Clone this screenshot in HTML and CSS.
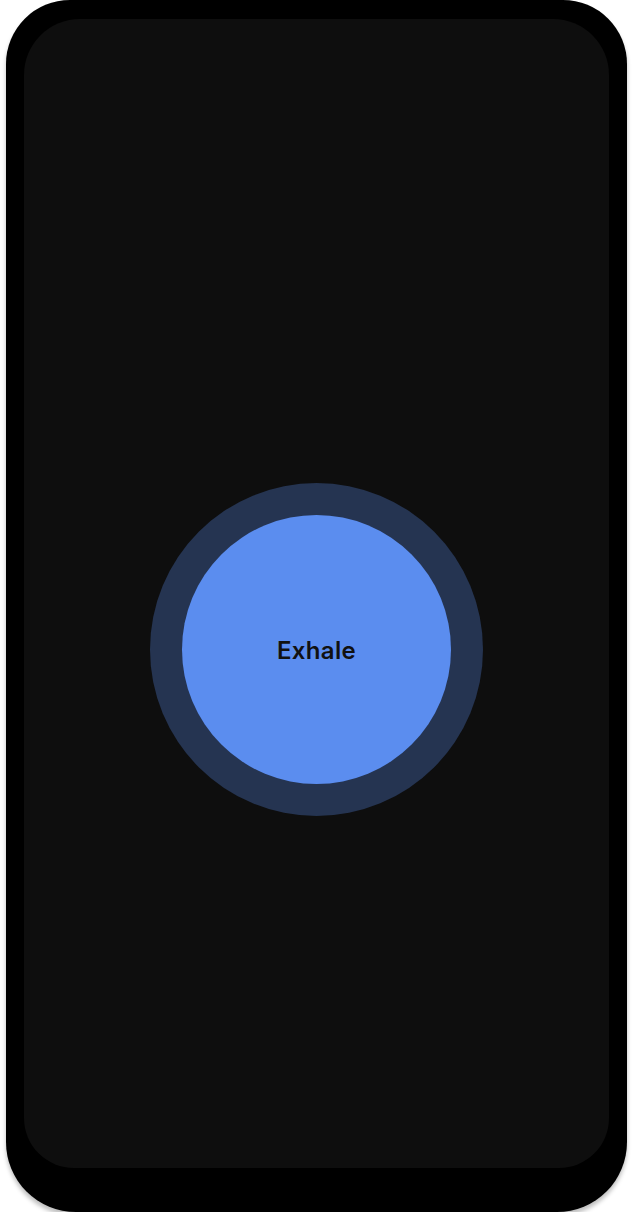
FILE: index.html
```html
<!DOCTYPE html>
<html>
<head>
<meta charset="utf-8">
<link rel="stylesheet" href="styles.css">
</head>
<body>
<div class="device">
  <div class="screen">
    <div class="ring">
      <div class="core">
        <span class="label">Exhale</span>
      </div>
    </div>
  </div>
</div>
</body>
</html>
```
FILE: styles.css
```css
html, body {
  margin: 0;
  padding: 0;
  background: #ffffff;
}
body {
  font-family: Inter, "Noto Sans", sans-serif;
}
.device {
  box-sizing: border-box;
  margin-left: 6px;
  width: 621px;
  height: 1212px;
  padding: 19px 18px 44px 18px;
  background: #000000;
  border-radius: 64px 64px 70px 70px;
  box-shadow: 0 4px 4px rgba(0, 0, 0, 0.25);
}
.screen {
  box-sizing: border-box;
  height: 100%;
  background: #0e0e0e;
  border-radius: 56px 56px 50px 50px;
  display: flex;
  align-items: center;
  justify-content: center;
  padding-top: 112px;
}
.ring {
  width: 333px;
  height: 333px;
  border-radius: 50%;
  background: #253451;
  display: flex;
  align-items: center;
  justify-content: center;
}
.core {
  width: 269px;
  height: 269px;
  border-radius: 50%;
  background: #5b8def;
  display: flex;
  align-items: center;
  justify-content: center;
}
.label {
  font-size: 24px;
  font-weight: 600;
  letter-spacing: 0.3px;
  color: #111111;
  padding-top: 2px;
}
```
